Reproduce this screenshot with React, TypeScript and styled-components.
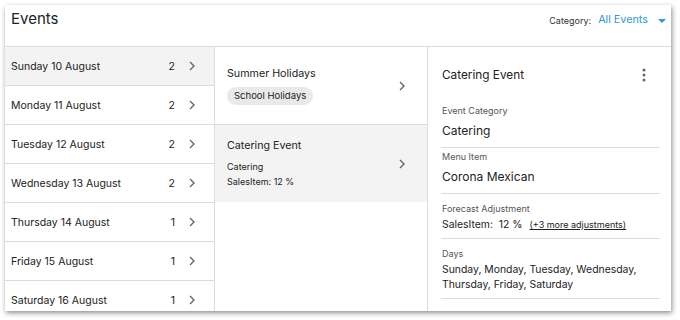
import React from "react";
import styled, { createGlobalStyle } from "styled-components";

const GlobalStyle = createGlobalStyle`
  html, body {
    margin: 0;
    padding: 0;
    background: #fff;
    font-family: Inter, "Noto Sans", sans-serif;
    color: #222;
  }
`;

const Page = styled.div`
  padding: 5px 9px 9px 5px;
`;

const Card = styled.div`
  height: 306px;
  background: #fff;
  box-shadow: 1px 2px 5px rgba(0, 0, 0, 0.45);
  display: flex;
  flex-direction: column;
  overflow: hidden;
`;

const Header = styled.div`
  height: 41px;
  border-bottom: 1px solid #dcdcdc;
  display: flex;
  align-items: flex-start;
  justify-content: space-between;
  padding: 0 5px 0 6px;
`;

const Title = styled.h1`
  margin: 5px 0 0;
  font-size: 15px;
  line-height: 18px;
  font-weight: 400;
  color: #222;
`;

const CategoryPicker = styled.div`
  display: flex;
  align-items: center;
  margin-top: 8px;
`;

const CategoryLabel = styled.span`
  font-size: 9px;
  color: #333;
  margin-right: 7px;
  margin-top: 2px;
`;

const CategoryValue = styled.span`
  font-size: 10.8px;
  color: #2b9ad6;
`;

const Caret = styled.span`
  margin: 3px 0 0 10px;
  width: 0;
  height: 0;
  border-left: 4px solid transparent;
  border-right: 4px solid transparent;
  border-top: 4px solid #2b9ad6;
`;

const Body = styled.div`
  flex: 1;
  display: flex;
  min-height: 0;
`;

const Column = styled.div<{ $width: number; $last?: boolean }>`
  width: ${(p) => p.$width}px;
  flex-shrink: 0;
  border-right: ${(p) => (p.$last ? "none" : "1px solid #dcdcdc")};
  display: flex;
  flex-direction: column;
`;

const DayRow = styled.div<{ $active?: boolean }>`
  height: 38px;
  flex-shrink: 0;
  border-bottom: 1px solid #dcdcdc;
  background: ${(p) => (p.$active ? "#f3f3f3" : "#fff")};
  display: flex;
  align-items: center;
  padding: 0 0 0 6px;
  font-size: 10.5px;
  color: #222;
`;

const DayName = styled.span`
  flex: 1;
`;

const DayCount = styled.span`
  text-align: right;
`;

const ChevronBox = styled.span<{ $gap: number; $right: number }>`
  display: flex;
  margin-left: ${(p) => p.$gap}px;
  margin-right: ${(p) => p.$right}px;
`;

const EventRow = styled.div<{ $active?: boolean }>`
  height: 77px;
  flex-shrink: 0;
  border-bottom: ${(p) => (p.$active ? "none" : "1px solid #dcdcdc")};
  background: ${(p) => (p.$active ? "#f3f3f3" : "#fff")};
  display: flex;
  align-items: center;
  padding: 0 0 0 12px;
`;

const EventInfo = styled.div`
  flex: 1;
  display: flex;
  flex-direction: column;
  align-items: flex-start;
`;

const EventTitle = styled.div`
  font-size: 10.7px;
  color: #222;
  margin-bottom: 7px;
`;

const EventLine = styled.div`
  font-size: 9px;
  color: #222;
  line-height: 15px;
`;

const Chip = styled.span`
  font-size: 9.5px;
  background: #e9e9e9;
  border-radius: 9px;
  padding: 3px 7px 4px;
  color: #222;
`;

const Details = styled.div`
  padding: 0 13px 0 13px;
  display: flex;
  flex-direction: column;
`;

const DetailHeader = styled.div`
  height: 55px;
  display: flex;
  align-items: center;
  justify-content: space-between;
  padding: 0 14px 0 1px;
`;

const DetailTitle = styled.div`
  font-size: 11.8px;
  color: #222;
`;

const Field = styled.div<{ $large?: boolean }>`
  border-bottom: 1px solid #dcdcdc;
  padding: ${(p) => (p.$large ? "3px 0 6px 1px" : "9px 0 6px 1px")};
`;

const FieldLabel = styled.div`
  font-size: 9px;
  color: #555;
  line-height: 12px;
`;

const FieldValue = styled.div<{ $large?: boolean }>`
  font-size: ${(p) => (p.$large ? 12 : 10.4)}px;
  color: #222;
  line-height: ${(p) => (p.$large ? 20 : 15)}px;
  margin-top: ${(p) => (p.$large ? 4 : 2)}px;
`;

const MoreLink = styled.a`
  font-size: 9px;
  color: #222;
  text-decoration: underline;
  margin-left: 7px;
`;

const Chevron = () => (
  <svg width="6" height="10" viewBox="0 0 6 10">
    <path d="M1 1l4 4-4 4" fill="none" stroke="#666" strokeWidth="1.4" />
  </svg>
);

const Kebab = () => (
  <svg width="4" height="14" viewBox="0 0 4 14">
    <circle cx="2" cy="2" r="1.5" fill="#666" />
    <circle cx="2" cy="7" r="1.5" fill="#666" />
    <circle cx="2" cy="12" r="1.5" fill="#666" />
  </svg>
);

const days = [
  { label: "Sunday 10 August", count: 2 },
  { label: "Monday 11 August", count: 2 },
  { label: "Tuesday 12 August", count: 2 },
  { label: "Wednesday 13 August", count: 2 },
  { label: "Thursday 14 August", count: 1 },
  { label: "Friday 15 August", count: 1 },
  { label: "Saturday 16 August", count: 1 },
];

const App: React.FC = () => {
  return (
    <>
      <GlobalStyle />
      <Page>
        <Card>
          <Header>
            <Title>Events</Title>
            <CategoryPicker>
              <CategoryLabel>Category:</CategoryLabel>
              <CategoryValue>All Events</CategoryValue>
              <Caret />
            </CategoryPicker>
          </Header>
          <Body>
            <Column $width={209}>
              {days.map((day, i) => (
                <DayRow key={day.label} $active={i === 0}>
                  <DayName>{day.label}</DayName>
                  <DayCount>{day.count}</DayCount>
                  <ChevronBox $gap={14} $right={19}>
                    <Chevron />
                  </ChevronBox>
                </DayRow>
              ))}
            </Column>
            <Column $width={212}>
              <EventRow>
                <EventInfo>
                  <EventTitle>Summer Holidays</EventTitle>
                  <Chip>School Holidays</Chip>
                </EventInfo>
                <ChevronBox $gap={0} $right={22}>
                  <Chevron />
                </ChevronBox>
              </EventRow>
              <EventRow $active>
                <EventInfo>
                  <EventTitle>Catering Event</EventTitle>
                  <EventLine>Catering</EventLine>
                  <EventLine>SalesItem: 12 %</EventLine>
                </EventInfo>
                <ChevronBox $gap={0} $right={22}>
                  <Chevron />
                </ChevronBox>
              </EventRow>
            </Column>
            <Column $width={245} $last>
              <Details>
                <DetailHeader>
                  <DetailTitle>Catering Event</DetailTitle>
                  <Kebab />
                </DetailHeader>
                <Field $large>
                  <FieldLabel>Event Category</FieldLabel>
                  <FieldValue $large>Catering</FieldValue>
                </Field>
                <Field $large>
                  <FieldLabel>Menu Item</FieldLabel>
                  <FieldValue $large>Corona Mexican</FieldValue>
                </Field>
                <Field>
                  <FieldLabel>Forecast Adjustment</FieldLabel>
                  <FieldValue>
                    SalesItem:&nbsp; 12 %
                    <MoreLink>(+3 more adjustments)</MoreLink>
                  </FieldValue>
                </Field>
                <Field>
                  <FieldLabel>Days</FieldLabel>
                  <FieldValue>
                    Sunday, Monday, Tuesday, Wednesday, Thursday, Friday,
                    Saturday
                  </FieldValue>
                </Field>
              </Details>
            </Column>
          </Body>
        </Card>
      </Page>
    </>
  );
};

export default App;
